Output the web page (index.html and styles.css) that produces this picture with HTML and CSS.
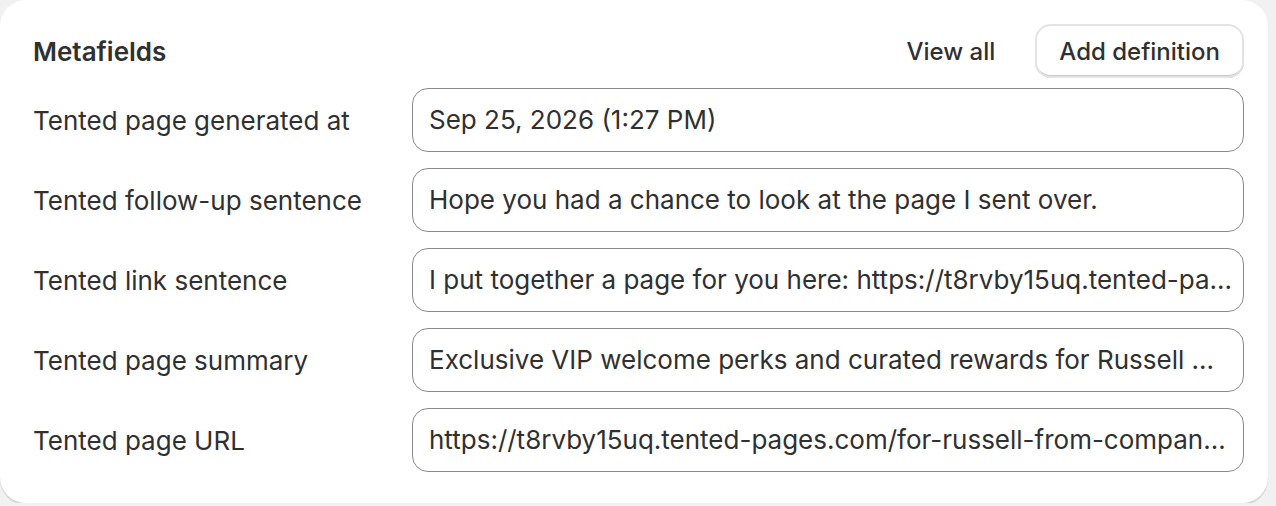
FILE: index.html
```html
<!DOCTYPE html>
<html lang="en">
<head>
	<meta charset="UTF-8" />
	<title>Metafields</title>
	<link rel="stylesheet" href="styles.css">
</head>
<body>
	<div class="card">
		<div class="cardHead">
			<h2 class="title">Metafields</h2>
			<div class="actions">
				<a class="viewAll" href="#">View all</a>
				<button class="btn" type="button">Add definition</button>
			</div>
		</div>
		<div class="fields">
			<div class="row">
				<label class="coluName" for="f1">Tented page generated at</label>
				<div class="field" id="f1">Sep 25, 2026 (1:27 PM)</div>
			</div>
			<div class="row">
				<label class="coluName" for="f2">Tented follow-up sentence</label>
				<div class="field" id="f2">Hope you had a chance to look at the page I sent over.</div>
			</div>
			<div class="row">
				<label class="coluName" for="f3">Tented link sentence</label>
				<div class="field" id="f3">I put together a page for you here: https://t8rvby15uq.tented-pa...</div>
			</div>
			<div class="row">
				<label class="coluName" for="f4">Tented page summary</label>
				<div class="field" id="f4">Exclusive VIP welcome perks and curated rewards for Russell ...</div>
			</div>
			<div class="row">
				<label class="coluName" for="f5">Tented page URL</label>
				<div class="field" id="f5">https://t8rvby15uq.tented-pages.com/for-russell-from-compan...</div>
			</div>
		</div>
	</div>
</body>
</html>
```

FILE: styles.css
```css
html, body {
	margin: 0;
	padding: 0;
}
body {
	background: #f1f1f1;
	font-family: Inter, "Noto Sans", sans-serif;
	color: #303030;
	font-size: 26px;
}
.card {
	width: 1268px;
	height: 503px;
	box-sizing: border-box;
	background: #fff;
	border-radius: 26px;
	box-shadow: 0 2px 1px rgba(0, 0, 0, 0.12);
	padding: 24px 24px 0 33px;
}
.cardHead {
	display: flex;
	align-items: center;
	justify-content: space-between;
	height: 54px;
	margin-bottom: 10px;
}
.title {
	margin: 0;
	font-size: 26px;
	font-weight: 600;
}
.actions {
	display: flex;
	align-items: center;
	gap: 40px;
	font-size: 24px;
}
.viewAll {
	color: #303030;
	text-decoration: none;
	font-weight: 500;
}
.btn {
	font: inherit;
	font-weight: 500;
	color: #303030;
	background: #fff;
	height: 54px;
	padding: 0 24px;
	border: 0;
	border-radius: 16px;
	box-shadow: inset 0 0 0 2px #e3e3e3, inset 0 -3px 0 #c9c9c9;
}
.fields {
	display: flex;
	flex-direction: column;
	gap: 16px;
}
.row {
	display: flex;
	align-items: center;
}
.coluName {
	width: 379px;
	flex: none;
}
.field {
	flex: 1;
	min-width: 0;
	height: 64px;
	box-sizing: border-box;
	border: 1.5px solid #8a8a8a;
	border-radius: 16px;
	padding: 0 16px;
	line-height: 61px;
	white-space: nowrap;
	overflow: hidden;
}
```
